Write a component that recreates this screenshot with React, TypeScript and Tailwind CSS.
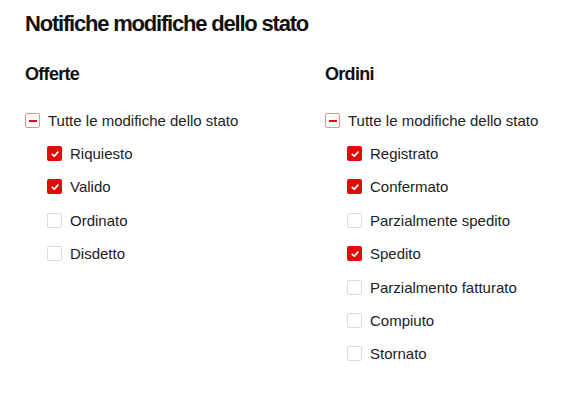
type Item = { label: string; checked: boolean }

const offerte: Item[] = [
  { label: 'Riquiesto', checked: true },
  { label: 'Valido', checked: true },
  { label: 'Ordinato', checked: false },
  { label: 'Disdetto', checked: false },
]

const ordini: Item[] = [
  { label: 'Registrato', checked: true },
  { label: 'Confermato', checked: true },
  { label: 'Parzialmente spedito', checked: false },
  { label: 'Spedito', checked: true },
  { label: 'Parzialmento fatturato', checked: false },
  { label: 'Compiuto', checked: false },
  { label: 'Stornato', checked: false },
]

function Box({ checked }: { checked: boolean }) {
  if (checked) {
    return (
      <span className="flex h-[15px] w-[15px] shrink-0 items-center justify-center rounded-[2px] bg-[#e10b0b]">
        <svg width="10" height="10" viewBox="0 0 10 10">
          <path d="M2.3 5.3 L4.3 7.2 L7.9 3.1" fill="none" stroke="white" strokeWidth="1.7" strokeLinecap="round" strokeLinejoin="round" />
        </svg>
      </span>
    )
  }
  return <span className="h-[15px] w-[15px] shrink-0 rounded-[2px] border border-[#dcdcdc] bg-white" />
}

function Group({ title, items, className }: { title: string; items: Item[]; className: string }) {
  return (
    <div className={className}>
      <h2 className="text-[18px] font-bold leading-none tracking-[-0.7px] text-[#111]">{title}</h2>
      <div className="mt-[30px] flex items-center gap-[8px]">
        <span className="flex h-[15px] w-[15px] shrink-0 items-center justify-center rounded-[2px] border border-[#f08c8c] bg-white">
          <span className="h-[2px] w-[8px] bg-[#e10b0b]" />
        </span>
        <span className="text-[15px] leading-none text-[#222]">Tutte le modifiche dello stato</span>
      </div>
      <ul className="mt-[18px] flex flex-col gap-[18.4px] pl-[22px]">
        {items.map((it) => (
          <li key={it.label} className="flex items-center gap-[8px]">
            <Box checked={it.checked} />
            <span className="text-[15px] leading-none text-[#222]">{it.label}</span>
          </li>
        ))}
      </ul>
    </div>
  )
}

export default function App() {
  return (
    <div className="h-[413px] w-[580px] bg-white px-[25px] pt-[13px] font-['Liberation_Sans',Arial,sans-serif]">
      <h1 className="text-[22px] font-bold leading-none tracking-[-1.2px] text-[#111]">Notifiche modifiche dello stato</h1>
      <div className="mt-[30px] flex">
        <Group title="Offerte" items={offerte} className="w-[300px] shrink-0" />
        <Group title="Ordini" items={ordini} className="flex-1" />
      </div>
    </div>
  )
}
